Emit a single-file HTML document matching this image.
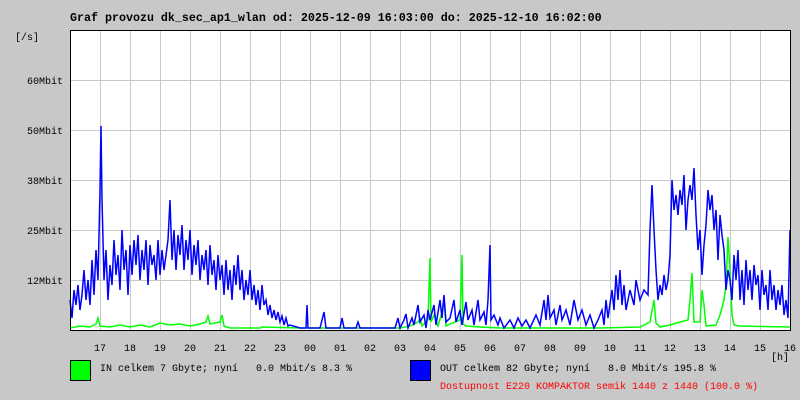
<!DOCTYPE html>
<html><head><meta charset="utf-8"><style>
body{margin:0;width:800px;height:400px;background:#c8c8c8;overflow:hidden;font-family:"Liberation Mono",monospace;}
.t{position:absolute;white-space:pre;font-size:10px;line-height:12px;color:#000}
</style></head><body>
<div class="t" style="left:70px;top:12px;font-size:11.67px;font-weight:bold">Graf provozu dk_sec_ap1_wlan od: 2025-12-09 16:03:00 do: 2025-12-10 16:02:00</div>
<svg width="800" height="400" style="position:absolute;left:0;top:0" font-family="Liberation Mono, monospace" font-size="10">
<rect x="70" y="30" width="720" height="300" fill="#fff"/>
<g stroke="#c8c8c8" stroke-width="1">
<path d="M100.5 30V330M130.5 30V330M160.5 30V330M190.5 30V330M220.5 30V330M250.5 30V330M280.5 30V330M310.5 30V330M340.5 30V330M370.5 30V330M400.5 30V330M430.5 30V330M460.5 30V330M490.5 30V330M520.5 30V330M550.5 30V330M580.5 30V330M610.5 30V330M640.5 30V330M670.5 30V330M700.5 30V330M730.5 30V330M760.5 30V330"/>
<path d="M64 80.5H790M64 130.5H790M64 180.5H790M64 230.5H790M64 280.5H790"/>
</g>
<polyline fill="none" stroke="#00ff00" stroke-width="1.5" points="70,328 80,326 90,327 96,324 98,318 100,326 110,327 120,325 130,327 140,325 150,327 160,323 170,325 180,324 190,326 200,324 206,322 208,316 210,324 220,322 222,315 224,326 230,328 260,328 262,327 300,328 400,328 410,326 418,322 420,318 422,326 428,320 430,258 431,322 434,315 438,326 442,312 444,300 446,326 450,324 460,320 462,255 463,324 466,326 480,327 500,328 600,328 640,327 650,322 654,300 656,323 660,327 670,325 680,322 688,320 690,300 692,273 694,322 700,322 702,290 704,305 706,326 716,325 720,315 724,300 726,285 728,237 730,270 732,315 734,325 740,326 790,327"/>
<polyline fill="none" stroke="#0000ff" stroke-width="1.5" points="70,300 72,318 74,290 76,305 78,285 80,310 82,295 84,270 86,300 88,280 90,305 92,260 94,295 96,250 98,280 100,190 101,126 102,200 104,280 106,250 108,300 110,265 112,285 114,240 116,275 118,255 120,290 122,230 124,270 126,250 128,295 130,245 132,275 134,240 136,265 138,235 140,280 142,250 144,270 146,240 148,285 150,245 152,265 154,255 156,280 158,240 160,275 162,250 164,270 166,255 168,240 170,200 172,260 174,230 176,270 178,235 180,255 182,225 184,270 186,240 188,260 190,230 192,275 194,245 196,265 198,240 200,280 202,255 204,270 206,250 208,285 210,245 212,275 214,260 216,290 218,255 220,280 222,265 224,295 226,260 228,290 230,270 232,300 234,265 236,285 238,255 240,290 242,270 244,300 246,280 248,295 250,270 252,300 254,285 256,305 258,290 260,310 262,285 264,305 266,300 268,315 270,305 272,318 274,310 276,320 278,312 280,322 282,316 284,325 286,318 288,326 290,325 300,328 306,328 307,305 308,328 320,328 324,312 326,328 340,328 342,318 344,328 356,328 358,322 360,328 395,328 398,318 400,328 404,320 406,314 408,328 412,318 414,325 418,305 420,322 424,315 426,328 428,310 430,320 434,305 436,325 440,300 442,318 444,295 446,322 450,318 454,300 456,322 460,310 462,325 466,302 468,320 472,310 474,325 478,300 480,320 484,312 486,325 488,300 490,245 491,320 494,315 498,325 500,318 504,328 510,320 514,328 518,318 522,326 526,320 530,328 536,315 540,325 544,300 546,320 548,295 550,318 554,310 556,325 560,305 562,320 566,310 570,325 574,300 578,320 582,310 586,325 590,315 594,328 598,320 602,310 604,325 606,300 608,318 612,290 614,310 616,275 618,300 620,270 622,305 624,285 626,310 630,290 634,305 636,280 640,300 644,290 648,295 650,230 652,185 654,230 656,270 658,300 660,285 662,295 664,275 666,290 668,280 670,255 672,180 674,210 676,195 678,215 680,190 682,205 684,175 686,230 688,200 690,185 692,200 694,168 696,215 698,250 700,230 702,275 704,245 706,225 708,190 710,210 712,195 714,230 716,210 718,260 720,215 722,235 724,250 726,290 728,270 730,280 732,300 734,255 736,280 738,250 740,300 742,270 744,305 746,260 748,290 750,270 752,300 754,265 756,285 758,275 760,310 762,270 764,295 766,285 768,310 770,270 772,300 774,285 776,310 778,290 780,305 782,285 784,315 786,300 788,318 790,230"/>
<rect x="70.5" y="30.5" width="720" height="300" fill="none" stroke="#000" stroke-width="1"/>
<g fill="#000" text-anchor="end">
<text x="63" y="84">60Mbit</text><text x="63" y="134">50Mbit</text><text x="63" y="184">38Mbit</text><text x="63" y="234">25Mbit</text><text x="63" y="284">12Mbit</text>
</g>
<text x="15" y="40" fill="#000">[/s]</text>
<g fill="#000" text-anchor="middle">
<text x="100" y="351">17</text><text x="130" y="351">18</text><text x="160" y="351">19</text><text x="190" y="351">20</text><text x="220" y="351">21</text><text x="250" y="351">22</text><text x="280" y="351">23</text><text x="310" y="351">00</text><text x="340" y="351">01</text><text x="370" y="351">02</text><text x="400" y="351">03</text><text x="430" y="351">04</text><text x="460" y="351">05</text><text x="490" y="351">06</text><text x="520" y="351">07</text><text x="550" y="351">08</text><text x="580" y="351">09</text><text x="610" y="351">10</text><text x="640" y="351">11</text><text x="670" y="351">12</text><text x="700" y="351">13</text><text x="730" y="351">14</text><text x="760" y="351">15</text><text x="790" y="351">16</text>
</g>
<text x="771" y="360" fill="#000">[h]</text>
<rect x="70.5" y="360.5" width="20" height="20" fill="#00ff00" stroke="#000"/>
<rect x="410.5" y="360.5" width="20" height="20" fill="#0000ff" stroke="#000"/>
<text x="100" y="371" fill="#000" xml:space="preserve">IN celkem 7 Gbyte; nyní   0.0 Mbit/s 8.3 %</text>
<text x="440" y="371" fill="#000" xml:space="preserve">OUT celkem 82 Gbyte; nyní   8.0 Mbit/s 195.8 %</text>
<text x="440" y="389" fill="#ff0000" xml:space="preserve">Dostupnost E220 KOMPAKTOR semik 1440 z 1440 (100.0 %)</text>
</svg>
</body></html>
